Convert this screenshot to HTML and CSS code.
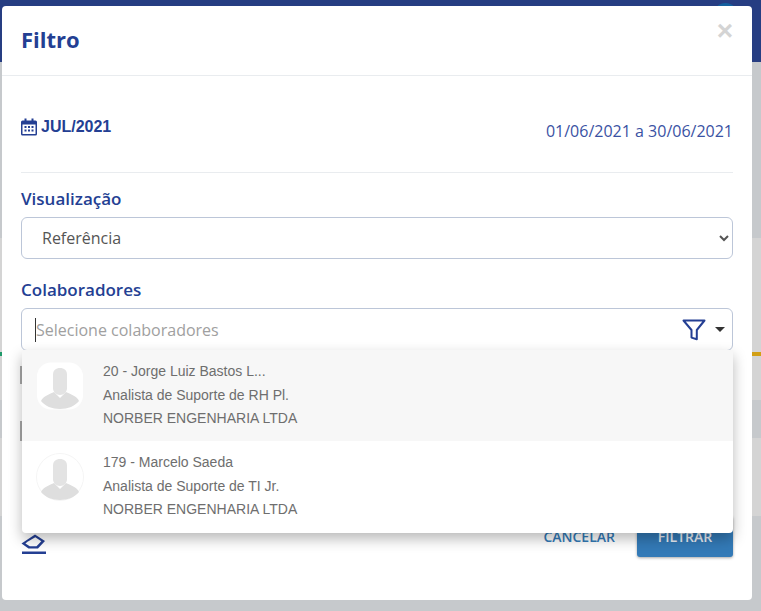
FILE: index.html
```html
<!DOCTYPE html>
<html lang="pt-BR">
<head>
<meta charset="utf-8">
<title>Filtro</title>
<link rel="stylesheet" href="styles.css">
</head>
<body>
<div class="page">
  <div class="band band-nav"><span class="nav-dot"></span></div>
  <div class="band band-a"></div>
  <div class="band band-b"></div>
  <div class="band band-gold"></div>
  <div class="band band-c"></div>
  <div class="band band-d"></div>
  <div class="band band-e"></div>
</div>
<div class="modal">
  <header class="modal-header">
    <h1 class="modal-title">Filtro</h1>
    <span class="modal-close">×</span>
  </header>
  <div class="modal-body">
    <div class="period">
      <div class="period-month">
        <svg class="calendar" viewBox="0 0 16 18" width="16" height="18" aria-hidden="true">
          <path d="M3.5 0.5h2v2h5v-2h2v2h2a1.5 1.5 0 0 1 1.5 1.5v12a1.5 1.5 0 0 1-1.5 1.5h-13A1.5 1.5 0 0 1 0 16V4a1.5 1.5 0 0 1 1.500-1.500h2z" fill="#243f93"/>
          <rect x="1.500" y="6.500" width="13" height="9.500" fill="#fff"/>
          <path d="M3.500 8h2v2h-2zM7 8h2v2H7zM10.500 8h2v2h-2zM3.500 11.500h2v2h-2zM7 11.500h2v2H7zM10.500 11.500h2v2h-2z" fill="#243f93"/>
        </svg>
        <span>JUL/2021</span>
      </div>
      <div class="period-range">01/06/2021 a 30/06/2021</div>
    </div>
    <div class="field field-first">
      <label class="field-label" for="vis">Visualização</label>
      <select class="select" id="vis"><option>Referência</option></select>
    </div>
    <div class="field field-second">
      <span class="field-label">Colaboradores</span>
      <div class="combo">
        <span class="caret"></span>
        <span class="placeholder">Selecione colaboradores</span>
        <svg class="funnel" viewBox="0 0 24 22" width="24" height="22" aria-hidden="true">
          <path d="M1.500 1.500h21L14.800 11v9.200l-5.300-1.600V11z" fill="none" stroke="#243f93" stroke-width="2" stroke-linejoin="round"/>
        </svg>
        <span class="combo-arrow"></span>
      </div>
    </div>
    <div class="modal-actions">
      <svg class="eraser" viewBox="0 0 25 20" width="25" height="20" aria-hidden="true">
        <path d="M14 0.500l10 6.500-7 7.500H7.500L0.500 9.500z" fill="#243f93"/>
        <path d="M6.500 7.800l7.800-4.600 6 4-4.800 5H8.800L4.400 9.600z" fill="#fff"/>
        <path d="M1 17.500h24V20H1z" fill="#243f93"/>
      </svg>
      <div class="actions-right">
        <button class="btn btn-link" type="button">CANCELAR</button>
        <button class="btn btn-primary" type="button">FILTRAR</button>
      </div>
    </div>
  </div>
</div>
<span class="ghost ghost-a"></span>
<span class="ghost ghost-b"></span>
<div class="dropdown">
  <div class="option option-active">
    <svg class="avatar" viewBox="0 0 48 48" width="48" height="48" aria-hidden="true">
      <rect x="1" y="0.500" width="46" height="47" rx="14" fill="#fff"/>
      <path d="M17 10c0-5 3-7 7-7s7 2 7 7v13c0 4-3 7-7 7s-7-3-7-7z" fill="#e3e3e3" transform="translate(0 3)"/>
      <path d="M5 39c2-5 9-7 13-9l6 6 6-6c4 2 11 4 13 9-4 5-11 8-19 8s-15-3-19-8z" fill="#dedede"/>
    </svg>
    <div class="option-text">
      <div>20 - Jorge Luiz Bastos L...</div>
      <div>Analista de Suporte de RH Pl.</div>
      <div>NORBER ENGENHARIA LTDA</div>
    </div>
  </div>
  <div class="option">
    <svg class="avatar" viewBox="0 0 48 48" width="48" height="48" aria-hidden="true">
      <circle cx="24" cy="24" r="23.500" fill="#fff" stroke="#f5f5f5"/>
      <path d="M17 10c0-5 3-7 7-7s7 2 7 7v13c0 4-3 7-7 7s-7-3-7-7z" fill="#e3e3e3" transform="translate(0 3)"/>
      <path d="M5 39c2-5 9-7 13-9l6 6 6-6c4 2 11 4 13 9-4 5-11 8-19 8s-15-3-19-8z" fill="#dedede"/>
    </svg>
    <div class="option-text">
      <div>179 - Marcelo Saeda</div>
      <div>Analista de Suporte de TI Jr.</div>
      <div>NORBER ENGENHARIA LTDA</div>
    </div>
  </div>
</div>
</body>
</html>
```
FILE: styles.css
```css
* { box-sizing: border-box; }
html, body { margin: 0; height: 100%; }
body {
  background: #c6c9cc;
  overflow: hidden;
  font-family: "Open Sans", sans-serif;
  color: #243f93;
}
.page { display: flex; flex-direction: column; }
.band-nav { height: 62px; background: #263d82; position: relative; }
.nav-dot {
  position: absolute; left: 713px; top: 3px;
  width: 25px; height: 25px; border-radius: 50%; background: #14609f;
}
.band-a { height: 176px; background: #c6c9cc; }
.band-b { height: 114px; background: #d4d4d4; }
.band-gold {
  height: 4px;
  background: linear-gradient(90deg, #1f9a6a 0 10px, #d29f14 10px);
}
.band-c { height: 44px; background: #d4d4d4; }
.band-d { height: 38px; background: #c6c9cc; }
.band-e { height: 78px; background: #d4d4d4; }

.modal {
  position: absolute; left: 2px; top: 6px;
  width: 750px; height: 594px;
  background: #fff; border-radius: 4px;
  display: flex; flex-direction: column;
}
.modal-header {
  height: 70px;
  flex: none;
  border-bottom: 1px solid #e9ecef;
  padding: 16px 19px 0;
  display: flex; justify-content: space-between; align-items: flex-start;
}
.modal-title { margin: 0; font-size: 22px; line-height: 34px; font-weight: 700; color: #243f93; }
.modal-close {
  font-family: "Liberation Sans", sans-serif;
  font-size: 28px; line-height: 20px; font-weight: 700; color: #d4d4d4;
  margin-right: 0; margin-top: -1px;
}
.modal-body { flex: 1; padding: 0 19px; display: flex; flex-direction: column; }
.period {
  height: 97px; flex: none;
  border-bottom: 1px solid #e9ecef;
  display: flex; justify-content: space-between;
}
.period-month {
  display: flex; align-items: center; gap: 4px; height: 20px; margin-top: 41px;
  font-family: "Liberation Sans", sans-serif; font-weight: 700; font-size: 16px; color: #243f93;
}
.calendar { flex: none; }
.period-range { margin-top: 43px; font-size: 16px; line-height: 24px; color: #3a52a3; }
.field { display: flex; flex-direction: column; }
.field-first { margin-top: 13px; }
.field-second { margin-top: 18px; }
.field-label { font-size: 17px; line-height: 26px; font-weight: 600; color: #243f93; margin-bottom: 5px; }
.select {
  width: 100%; height: 42px;
  border: 1px solid #bcc6d8; border-radius: 6px;
  background: #fff; color: #555;
  font-family: "Open Sans", sans-serif; font-size: 16px;
  padding: 0 16px;
}
.combo {
  height: 43px; border: 1px solid #bcc6d8; border-radius: 6px;
  display: flex; align-items: center; padding-left: 13px; position: relative;
}
.caret { width: 1px; height: 24px; background: #333; flex: none; }
.placeholder { flex: 1; font-size: 16px; color: #a0a0a0; }
.funnel { flex: none; margin-right: 9px; }
.combo-arrow {
  width: 0; height: 0; margin-right: 7px;
  border-left: 5px solid transparent; border-right: 5px solid transparent; border-top: 5px solid #333;
}
.modal-actions {
  margin-top: 165px;
  display: flex; justify-content: space-between; align-items: flex-start;
}
.eraser { margin-top: 18px; }
.actions-right { display: flex; align-items: center; gap: 22px; }
.btn {
  font-family: "Open Sans", sans-serif; font-size: 14px; font-weight: 600; border: 0; border-radius: 3px;
}
.btn-link { background: none; color: #337ab7; padding: 0; }
.btn-primary {
  width: 96px; height: 41px; background: #337ab7; color: #e9edf4;
  box-shadow: 0 1px 3px rgba(0,0,0,.35);
}

.dropdown {
  position: absolute; left: 22px; top: 350px; width: 711px; height: 183px;
  background: #fff; border-radius: 0 0 4px 4px;
  box-shadow: 0 6px 14px rgba(0,0,0,.28);
  font-family: "Liberation Sans", sans-serif; font-size: 14px; color: #6e6e6e;
  display: flex; flex-direction: column;
}
.option { height: 92px; display: flex; padding: 12px 0 0 14px; gap: 19px; }
.option-active { background: #f7f7f7; height: 91px; }
.avatar { flex: none; }
.option-text { line-height: 23.5px; margin-top: -2px; }
.ghost { position: absolute; left: 20px; width: 2px; background: #a9a9a9; }
.ghost-a { top: 366px; height: 18px; }
.ghost-b { top: 421px; height: 20px; }
```
